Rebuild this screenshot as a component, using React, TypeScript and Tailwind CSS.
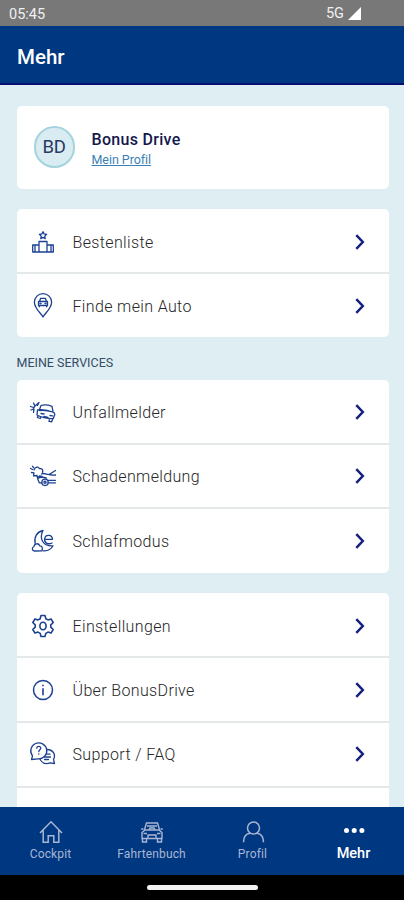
import type { ReactNode } from 'react';

function LineIcon({ children }: { children: ReactNode }) {
  return (
    <svg
      className="h-7 w-7 shrink-0 text-[#1d4191]"
      viewBox="0 0 28 28"
      fill="none"
      stroke="currentColor"
      strokeWidth="1.3"
      strokeLinecap="round"
      strokeLinejoin="round"
    >
      {children}
    </svg>
  );
}

const PodiumIcon = () => (
  <LineIcon>
    <path d="M14 3.700l1.100 2.200 2.500.4-1.800 1.800.4 2.500-2.200-1.200-2.200 1.200.4-2.500-1.800-1.800 2.500-.4z" />
    <path d="M10 24V13.500h8V24M10 17H3.700v7h20.600v-7H18M6 17v7M22 17v7" strokeWidth="1.300" />
  </LineIcon>
);

const PinIcon = () => (
  <LineIcon>
    <path d="M14 25c-1.800-3.600-8.600-8.500-8.600-14.800a8.600 8.600 0 0 1 17.200 0C22.600 16.500 15.800 21.400 14 25z" />
    <path d="M10.600 9.300l1-3h4.800l1 3M9.500 9.500h9v4h-9zM10.300 13.500v1.300M17.700 13.500v1.300M11 11.500h1M16 11.500h1" />
  </LineIcon>
);

const CrashIcon = () => (
  <LineIcon>
    <path d="M1.500 8.500l3 1M4.500 5l1.500 3 4-3.500-1.500 3M2 12l3-1.200-.5 3.500M6 8l-1.500 2" />
    <path d="M10.500 11.500l1.500-4c3.500-1 8-.3 11 .8l1 5M8.500 12c4.500-.8 11 .3 16.500 2.500l.8 2-1.600 4.200C19 20.500 12.500 19.500 8 17zM10.500 12.500c5-.5 9 .2 13.500 1.500M9 18l-.7 1.500 3 1 .7-1.500M20.500 20.500l-.5 2.800 2.700.5 1-3.300M12 15.500l3 .5M21 17.500l2.500.3M15 18.500l4 .8" />
  </LineIcon>
);

const DamageIcon = () => (
  <LineIcon>
    <path d="M1.500 6.500l2 1M3.500 4.200l1 1.500M5 8c1-3.500 4.500-3.500 5.500-1.300 2.500-.7 4 1.500 3 3.600M2.500 10.500l2.500.3-.5 3 3.500-.3.500 2.500 2-2 2.500.5" />
    <path d="M12.500 12c3-1.800 6 1.300 8 .3L26.500 8.500M17 12.200c3 0 5.500 1.500 9.500.8M8.500 16.500c3-1.700 6-1.600 9-.3M8.500 16.500l1.800 4.300h2.700M19 20.800h7.500M19 18.300h7.500" />
    <circle cx="16" cy="20.300" r="3.200" />
    <circle cx="16" cy="20.300" r="1.100" />
  </LineIcon>
);

const SleepIcon = () => (
  <LineIcon>
    <path d="M14 3.500C7.500 5 4.800 10.500 6.200 16.500M14 3.500c-4 7.500-.5 16 10 15.300-2 3.700-5.500 5.400-9.800 5" />
    <path d="M5.500 24a2.300 2.300 0 0 1-.5-4.500c.3-3.300 4.700-3.700 5.700-.7 2.300-.2 3.400 2.200 2.300 5z" />
    <path d="M15.500 12.300h8c-.2-5-7.300-5.500-7.900-.3-.3 4.500 3.900 5.700 7.400 4" />
  </LineIcon>
);

const GearIcon = () => (
  <LineIcon>
    <path
      d="M12 3.500h4l.8 3.200 2.200 1.200 3-1 2.200 3.600-2.400 2.300v2.400l2.400 2.300-2.200 3.600-3-1-2.200 1.300-.8 3.100h-4l-.8-3.100L9 20.100l-3 1-2.200-3.600 2.400-2.300v-2.400l-2.400-2.300L6 6.900l3 1 2.200-1.200z"
      strokeWidth="1.600"
    />
    <ellipse cx="14" cy="14" rx="3.100" ry="3.700" strokeWidth="1.600" />
  </LineIcon>
);

const InfoIcon = () => (
  <LineIcon>
    <circle cx="14" cy="14" r="9.500" strokeWidth="1.500" />
    <path d="M14 9.300v.4M14 12.700v6" strokeWidth="1.600" />
  </LineIcon>
);

const FaqIcon = () => (
  <LineIcon>
    <path d="M2.500 19.500l1-3.700A8 8 0 1 1 9 18.800z" />
    <path d="M7.700 8.200c.2-2.600 4.200-2.400 4 .1-.1 1.500-1.900 1.600-1.900 3.400M9.800 14v.2" />
    <path d="M18 9.500c7 .3 8.800 6 6.500 9.800l1 4.200-4.500-.6c-4.600 1.600-8.300-.3-10-3.600M18 14.200h3M15.500 17h6M15.500 19.500h4" />
  </LineIcon>
);

function Chevron() {
  return (
    <svg className="h-5 w-3 shrink-0" viewBox="0 0 12 20" fill="none" stroke="#16217f" strokeWidth="2.500">
      <path d="M2.300 3.200L8.800 10l-6.500 6.800" />
    </svg>
  );
}

function Row({ icon, label }: { icon: ReactNode; label: string }) {
  return (
    <div className="flex h-[64.600px] shrink-0 items-center border-t-2 border-[#e4e8e9] pr-[23px] pl-3 first:h-[63.200px] first:border-t-0 first:pt-0.5 last:h-[65.200px]">
      {icon}
      <span className="ml-4 flex-1 pt-0.5 text-base font-light tracking-[0.360px] whitespace-nowrap text-[#262626]">{label}</span>
      <Chevron />
    </div>
  );
}

function Card({ children }: { children: ReactNode }) {
  return <div className="flex shrink-0 flex-col overflow-hidden rounded-[5px] bg-white">{children}</div>;
}

function Tab({ icon, label, active = false }: { icon: ReactNode; label: string; active?: boolean }) {
  return (
    <div className={active ? 'flex flex-1 flex-col items-center text-white' : 'flex flex-1 flex-col items-center text-[#a9b6d3]'}>
      <svg className="mt-3 h-[26px] w-[26px]" viewBox="0 0 26 26" fill="none" stroke="currentColor" strokeWidth="1.500">
        {icon}
      </svg>
      <span className={active ? 'text-[14.500px] leading-[17px] font-medium' : 'pt-px text-xs leading-[17px] tracking-[0.150px]'}>
        {label}
      </span>
    </div>
  );
}

export default function App() {
  return (
    <div className="flex h-[900px] w-[404px] flex-col overflow-hidden bg-[#dfeef2] font-['Roboto',sans-serif]">
      <div className="flex h-[26px] shrink-0 items-center bg-[#787878] pr-[43px] pl-[9px] text-[#f0f0f0]">
        <span className="flex-1 pt-[3px] text-[14.500px]">05:45</span>
        <span className="pt-0.5 text-[14.500px]">5G</span>
        <svg className="ml-1 h-[13px] w-[13px]" viewBox="0 0 13 13">
          <path d="M13 0v13H0z" fill="#fff" />
        </svg>
      </div>
      <header className="flex h-[59px] shrink-0 items-center border-b-2 border-[#050f70] bg-[#003781] pt-[5px] pl-[17px]">
        <h1 className="text-[20.500px] font-medium text-white">Mehr</h1>
      </header>

      <main className="flex min-h-0 flex-1 flex-col overflow-hidden pt-[21px] pr-[15.500px] pl-[16.500px]">
        <Card>
          <div className="flex h-[82.500px] items-center pl-[17px]">
            <div className="flex h-[42px] w-[41px] items-center justify-center rounded-full border-2 border-[#a3d3dc] bg-[#d9ecf2] pt-0.5 text-[18.500px] tracking-[-0.300px] text-[#293864]">
              BD
            </div>
            <div className="ml-[17px] flex flex-col pt-1">
              <span className="text-base leading-5 font-medium tracking-[0.300px] text-[#15184d]">Bonus Drive</span>
              <span className="text-[12.500px] leading-[19px] tracking-[-0.050px] text-[#397fb5] underline">Mein Profil</span>
            </div>
          </div>
        </Card>
        <div className="h-[20.500px] shrink-0" />
        <Card>
          <Row icon={<PodiumIcon />} label="Bestenliste" />
          <Row icon={<PinIcon />} label="Finde mein Auto" />
        </Card>
        <div className="flex h-[42.300px] shrink-0 items-center pt-[10px] text-[12.500px] text-[#344c66]">
          MEINE SERVICES
        </div>
        <Card>
          <Row icon={<CrashIcon />} label="Unfallmelder" />
          <Row icon={<DamageIcon />} label="Schadenmeldung" />
          <Row icon={<SleepIcon />} label="Schlafmodus" />
        </Card>
        <div className="h-[20.500px] shrink-0" />
        <Card>
          <Row icon={<GearIcon />} label="Einstellungen" />
          <Row icon={<InfoIcon />} label="Über BonusDrive" />
          <Row icon={<FaqIcon />} label="Support / FAQ" />
          <div className="h-[65px] border-t-2 border-[#e4e8e9]" />
        </Card>
      </main>

      <nav className="flex h-[68px] shrink-0 bg-[#003781]">
        <Tab
          label="Cockpit"
          icon={<path d="M2 14L13 2.800 24 14M5.200 11v12.200h5v-6.500h5.600v6.500h5V11" />}
        />
        <Tab
          label="Fahrtenbuch"
          icon={
            <path
              d="M5.500 10.500l2-6.500h11l2 6.500M6 11h14l3 2.500v6H3v-6zM4.500 10H2.200M21.500 10h2.300M3.500 19.500V23h4v-3.500M18.500 19.500V23h4v-3.500M9 19.500V16h8v3.500M4.500 14.500h3.500M18 14.500h3.500M8 7h10M10 11l1-2h4l1 2"
              strokeWidth="1.400"
            />
          }
        />
        <Tab
          label="Profil"
          icon={
            <>
              <circle cx="13.500" cy="9" r="6" />
              <path d="M3.500 23.200c0-5.500 3-8.500 6.500-9M23.500 23.200c0-5.500-3-8.500-6.500-9" />
            </>
          }
        />
        <Tab
          active
          label="Mehr"
          icon={
            <g fill="currentColor" stroke="none">
              <circle cx="5.500" cy="11.500" r="2.500" />
              <circle cx="13.200" cy="11.500" r="2.500" />
              <circle cx="20.900" cy="11.500" r="2.500" />
            </g>
          }
        />
      </nav>
      <div className="flex h-[25px] shrink-0 justify-center bg-black pt-[10px]">
        <div className="h-[5px] w-[111px] rounded-full bg-[#f2f2f2]" />
      </div>
    </div>
  );
}
